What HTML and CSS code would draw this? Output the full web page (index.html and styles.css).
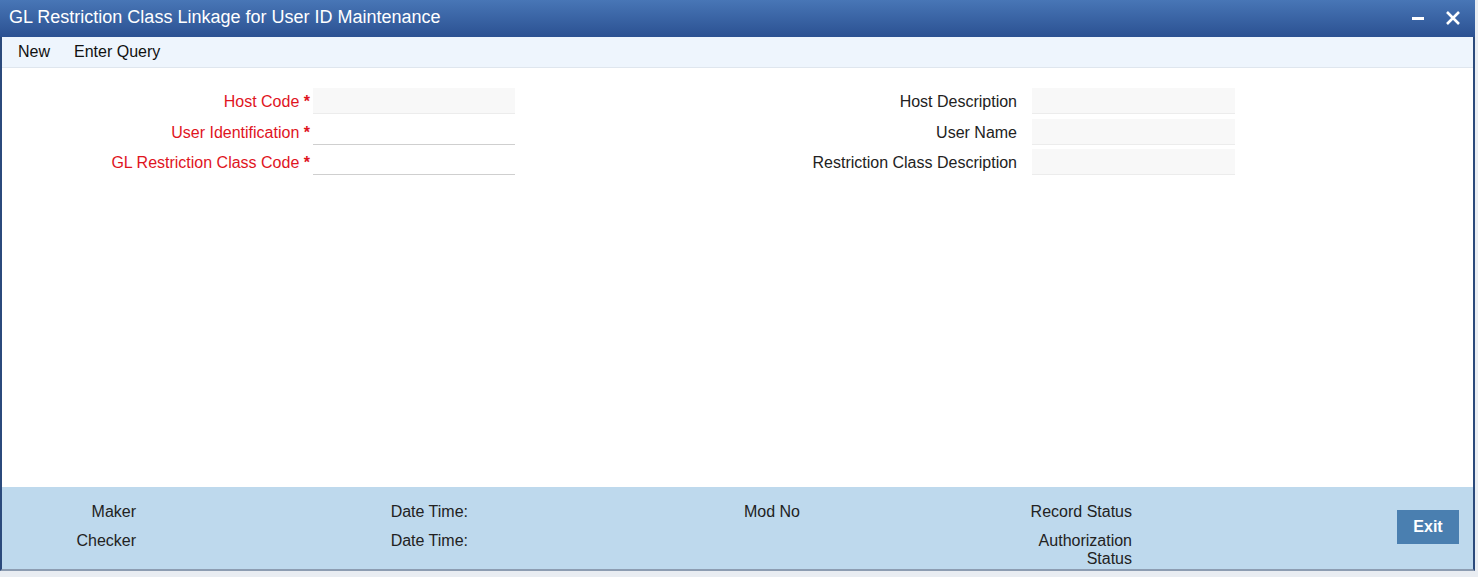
FILE: index.html
```html
<!DOCTYPE html>
<html>
<head>
<meta charset="utf-8">
<title>GL Restriction Class Linkage for User ID Maintenance</title>
<link rel="stylesheet" href="styles.css">
</head>
<body>

<div class="window">

<div class="titlebar">
    <span class="title">GL Restriction Class Linkage for User ID Maintenance</span>
    <span class="win-btns">
        <svg class="win-btn" width="14" height="14" viewBox="0 0 14 14"><rect x="1" y="6" width="12" height="3" fill="#fff"/></svg>
        <svg class="win-btn" width="16" height="16" viewBox="0 0 16 16"><path d="M2 2 L14 14 M14 2 L2 14" stroke="#fff" stroke-width="2.6"/></svg>
    </span>
</div>

<div class="toolbar">
    <span class="tool">New</span>
    <span class="tool">Enter Query</span>
</div>

<div class="form">
    <div class="field-group left">
        <label class="req">Host Code <b>*</b></label><div class="input shaded"></div>
        <label class="req">User Identification <b>*</b></label><div class="input"></div>
        <label class="req">GL Restriction Class Code <b>*</b></label><div class="input"></div>
    </div>
    <div class="field-group right">
        <label>Host Description</label><div class="input shaded"></div>
        <label>User Name</label><div class="input shaded"></div>
        <label>Restriction Class Description</label><div class="input shaded"></div>
    </div>
</div>

<div class="footer">
    <div class="audit">
        <span class="a-label">Maker</span><span class="a-value"></span>
        <span class="a-label">Date Time:</span><span class="a-value"></span>
        <span class="a-label">Mod No</span><span class="a-value"></span>
        <span class="a-label">Record Status</span>

        <span class="a-label">Checker</span><span class="a-value"></span>
        <span class="a-label">Date Time:</span><span class="a-value"></span>
        <span class="a-label"></span><span class="a-value"></span>
        <span class="a-label">Authorization Status</span>
    </div>
    <button class="exit">Exit</button>
</div>

</div>

</body>
</html>
```

FILE: styles.css
```css
body {
    margin: 0;
    font: 16px "Liberation Sans", Arial, sans-serif;
    color: #222;
    background: #e9edf2;
}

div.window {
    width: 1471px;
    height: 569px;
    border-left: 2px solid #2b4a7c;
    border-right: 2px solid #2b4a7c;
    border-bottom: 2px solid #8d9db2;
    background: #fff;
    display: flex;
    flex-direction: column;
}

div.titlebar {
    height: 37px;
    margin: 0 -2px;
    padding: 0 14px 0 9px;
    background: linear-gradient(#4876b6, #2b5192);
    color: #fff;
    display: flex;
    align-items: center;
    justify-content: space-between;
}

span.title {
    font-size: 18px;
    margin-top: -2px;
}

span.win-btns {
    display: flex;
    align-items: center;
    gap: 20px;
    margin-top: -2px;
}

div.toolbar {
    height: 30px;
    background: #eef5fd;
    border-bottom: 1px solid #dfe6ee;
    display: flex;
    align-items: center;
    padding-left: 16px;
    gap: 24px;
    color: #111;
}

div.form {
    flex: 1;
    display: flex;
    gap: 202px;
    padding-top: 20px;
}

div.field-group {
    display: grid;
    grid-auto-rows: 26px;
    row-gap: 4.5px;
    align-items: center;
}

div.field-group label {
    text-align: right;
    white-space: nowrap;
    padding-top: 2px;
}

div.field-group.left {
    grid-template-columns: 308px 202px;
    column-gap: 3px;
}

div.field-group.right {
    grid-template-columns: 300px 203px;
    column-gap: 15px;
}

label.req {
    color: #e0141e;
}

label.req b {
    font-weight: bold;
}

div.input {
    height: 25px;
    align-self: stretch;
    border-bottom: 1px solid #cfcfcf;
}

div.input.shaded {
    background: #f8f8f8;
    border-bottom-color: #ececec;
}

div.footer {
    height: 82px;
    background: #bed9ed;
    display: flex;
    justify-content: space-between;
    padding-left: 14px;
    padding-right: 14px;
}

div.audit {
    display: grid;
    grid-template-columns: 120px 212px 120px 212px 120px 212px 120px;
    grid-auto-rows: 18px;
    row-gap: 11px;
    padding-top: 16px;
    color: #222;
}

span.a-label {
    text-align: right;
}

button.exit {
    margin-top: 23px;
    width: 62px;
    height: 34px;
    border: none;
    background: #4a7fb0;
    color: #fff;
    font: bold 16px "Liberation Sans", Arial, sans-serif;
}
```
